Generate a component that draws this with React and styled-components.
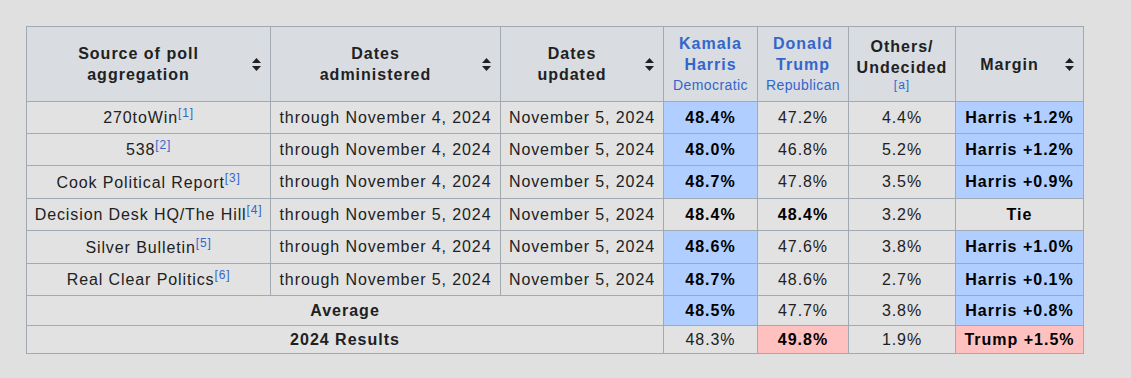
import React from 'react';
import styled, { createGlobalStyle } from 'styled-components';

const GlobalStyle = createGlobalStyle`
  body {
    margin: 0;
    background: #e0e0e0;
    font-family: "Liberation Sans", Arial, sans-serif;
    color: #202122;
  }
`;

const Page = styled.div`
  padding: 26px 0 0 26px;
`;

const Table = styled.table`
  border-collapse: collapse;
  table-layout: fixed;
  width: 1057px;
  border: 1px solid #a2a9b1;
  background: #e2e2e2;
  font-size: 16px;
  letter-spacing: 0.9px;
  text-align: center;
`;

const Th = styled.th`
  box-sizing: border-box;
  background: #d9dce0;
  border: 1px solid #a2a9b1;
  height: 75px;
  padding: 0 ${(p) => (p.sort ? 9 : 2)}px 0 2px;
  font-weight: bold;
  line-height: 21px;
  letter-spacing: 1px;
  width: ${(p) => p.w}px;
`;

const HeadInner = styled.div`
  display: flex;
  align-items: center;
  justify-content: center;
`;

const HeadText = styled.div`
  flex: 1;
`;

const SortIcon = styled.svg`
  flex: none;
  width: 9px;
  height: 13px;
  margin-left: 4px;
`;

const Cand = styled.span`
  color: #3366cc;
`;

const Party = styled.div`
  color: #3366cc;
  font-weight: normal;
  font-size: 14px;
  letter-spacing: 0.4px;
  line-height: 20px;
`;

const Note = styled.div`
  color: #3366cc;
  font-weight: normal;
  font-size: 12px;
  line-height: 14px;
`;

const Row = styled.tr`
  height: ${(p) => p.h}px;
`;

const Td = styled.td`
  border: 1px solid #a2a9b1;
  padding: 0 2px;
  line-height: 20px;
  white-space: nowrap;
  font-weight: ${(p) => (p.bold ? 'bold' : 'normal')};
  letter-spacing: ${(p) => (p.bold ? 1 : 0.9)}px;
  color: ${(p) => (p.bold && !p.label ? '#000' : '#202122')};
  background: ${(p) =>
    p.tone === 'blue' ? '#b0ceff' : p.tone === 'red' ? '#ffc0c0' : 'transparent'};
`;

const Ref = styled.sup`
  color: #3366cc;
  font-size: 12px;
  letter-spacing: 0.8px;
  line-height: 1;
  vertical-align: 6px;
`;

const Sort = () => (
  <SortIcon viewBox="0 0 9 13">
    <path d="M4.5 0 L9 5 L0 5 Z" fill="#202122" />
    <path d="M0 8 L9 8 L4.5 13 Z" fill="#202122" />
  </SortIcon>
);

const rows = [
  ['270toWin', 1, 'through November 4, 2024', '48.4%', '47.2%', '4.4%', 'Harris +1.2%', 32],
  ['538', 2, 'through November 4, 2024', '48.0%', '46.8%', '5.2%', 'Harris +1.2%', 32],
  ['Cook Political Report', 3, 'through November 4, 2024', '48.7%', '47.8%', '3.5%', 'Harris +0.9%', 33],
  ['Decision Desk HQ/The Hill', 4, 'through November 5, 2024', '48.4%', '48.4%', '3.2%', 'Tie', 32],
  ['Silver Bulletin', 5, 'through November 4, 2024', '48.6%', '47.6%', '3.8%', 'Harris +1.0%', 33],
  ['Real Clear Politics', 6, 'through November 5, 2024', '48.7%', '48.6%', '2.7%', 'Harris +0.1%', 32],
];

export default function App() {
  return (
    <Page>
      <GlobalStyle />
      <Table>
        <thead>
          <tr>
            <Th w={244} sort>
              <HeadInner>
                <HeadText>Source of poll<br />aggregation</HeadText>
                <Sort />
              </HeadInner>
            </Th>
            <Th w={230} sort>
              <HeadInner>
                <HeadText>Dates<br />administered</HeadText>
                <Sort />
              </HeadInner>
            </Th>
            <Th w={163} sort>
              <HeadInner>
                <HeadText>Dates<br />updated</HeadText>
                <Sort />
              </HeadInner>
            </Th>
            <Th w={94}>
              <Cand>Kamala<br />Harris</Cand>
              <Party>Democratic</Party>
            </Th>
            <Th w={91}>
              <Cand>Donald<br />Trump</Cand>
              <Party>Republican</Party>
            </Th>
            <Th w={107}>
              Others/<br />Undecided
              <Note>[a]</Note>
            </Th>
            <Th w={128} sort>
              <HeadInner>
                <HeadText>Margin</HeadText>
                <Sort />
              </HeadInner>
            </Th>
          </tr>
        </thead>
        <tbody>
          {rows.map(([src, ref, dates, h, t, o, m, ht]) => {
            const tie = m === 'Tie';
            return (
              <Row key={src} h={ht}>
                <Td>
                  {src}
                  <Ref>[{ref}]</Ref>
                </Td>
                <Td>{dates}</Td>
                <Td>November 5, 2024</Td>
                <Td bold tone={tie ? undefined : 'blue'}>{h}</Td>
                <Td bold={tie}>{t}</Td>
                <Td>{o}</Td>
                <Td bold tone={tie ? undefined : 'blue'}>{m}</Td>
              </Row>
            );
          })}
          <Row h={30}>
            <Td bold label colSpan={3}>Average</Td>
            <Td bold tone="blue">48.5%</Td>
            <Td>47.7%</Td>
            <Td>3.8%</Td>
            <Td bold tone="blue">Harris +0.8%</Td>
          </Row>
          <Row h={28}>
            <Td bold label colSpan={3}>2024 Results</Td>
            <Td>48.3%</Td>
            <Td bold tone="red">49.8%</Td>
            <Td>1.9%</Td>
            <Td bold tone="red">Trump +1.5%</Td>
          </Row>
        </tbody>
      </Table>
    </Page>
  );
}
